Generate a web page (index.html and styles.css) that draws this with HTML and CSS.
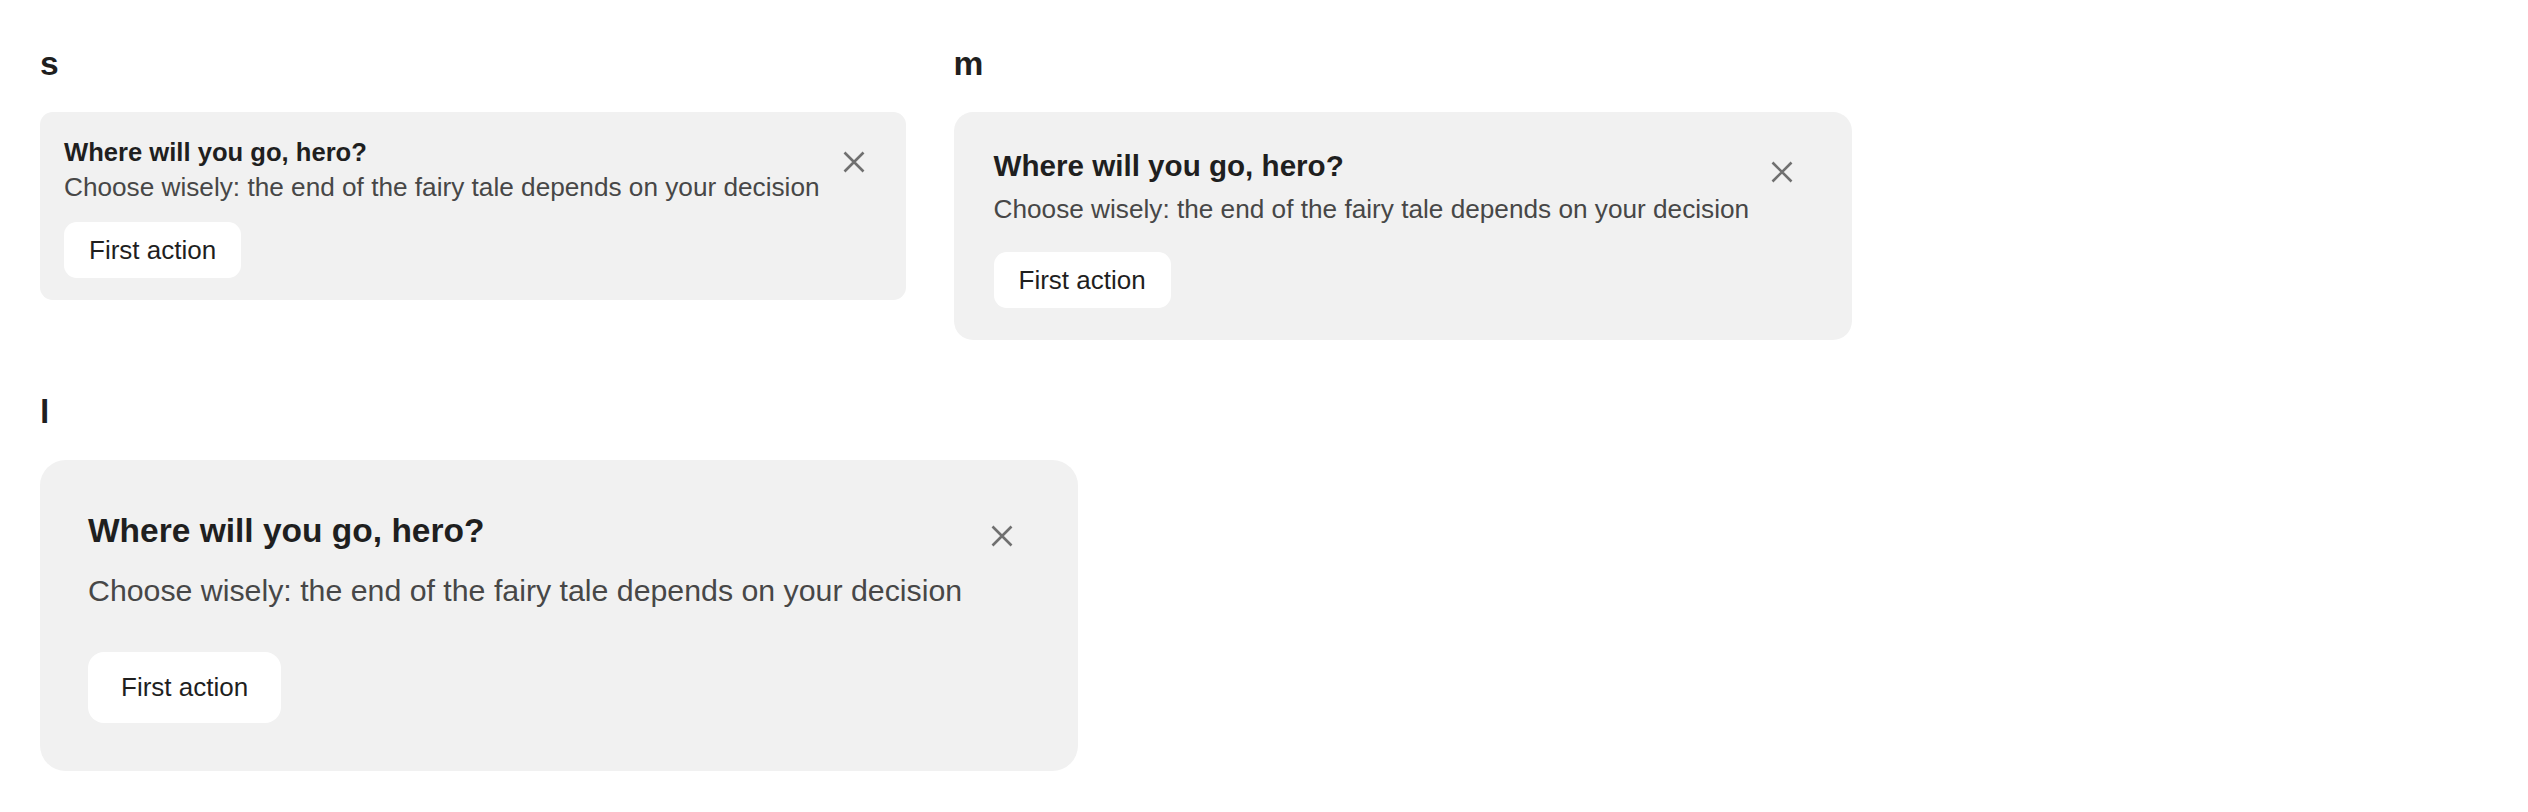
FILE: index.html
```html
<!DOCTYPE html>
<html lang="en">
<head>
<meta charset="utf-8">
<title>Notification sizes</title>
<link rel="stylesheet" href="styles.css">
</head>
<body>
<main class="page">
  <div class="row">
    <section class="variant">
      <div class="label">s</div>
      <div class="card card-s">
        <div class="content">
          <div class="title">Where will you go, hero?</div>
          <div class="desc">Choose wisely: the end of the fairy tale depends on your decision</div>
          <div class="actions"><button class="action" type="button">First action</button></div>
        </div>
        <button class="close" type="button" aria-label="Close">
          <svg viewBox="0 0 22 22" width="22" height="22"><path d="M1.5 1.5 L20.5 20.5 M20.5 1.5 L1.5 20.5" /></svg>
        </button>
      </div>
    </section>
    <section class="variant">
      <div class="label">m</div>
      <div class="card card-m">
        <div class="content">
          <div class="title">Where will you go, hero?</div>
          <div class="desc">Choose wisely: the end of the fairy tale depends on your decision</div>
          <div class="actions"><button class="action" type="button">First action</button></div>
        </div>
        <button class="close" type="button" aria-label="Close">
          <svg viewBox="0 0 22 22" width="22" height="22"><path d="M1.5 1.5 L20.5 20.5 M20.5 1.5 L1.5 20.5" /></svg>
        </button>
      </div>
    </section>
  </div>
  <div class="row row-2">
    <section class="variant">
      <div class="label">l</div>
      <div class="card card-l">
        <div class="content">
          <div class="title">Where will you go, hero?</div>
          <div class="desc">Choose wisely: the end of the fairy tale depends on your decision</div>
          <div class="actions"><button class="action" type="button">First action</button></div>
        </div>
        <button class="close" type="button" aria-label="Close">
          <svg viewBox="0 0 22 22" width="22" height="22"><path d="M1.5 1.5 L20.5 20.5 M20.5 1.5 L1.5 20.5" /></svg>
        </button>
      </div>
    </section>
  </div>
</main>
</body>
</html>
```

FILE: styles.css
```css
html, body {
  margin: 0;
  padding: 0;
  background: #ffffff;
}

body {
  font-family: "Liberation Sans", Arial, Helvetica, sans-serif;
  color: #1f1f1f;
}

.page {
  padding: 44px 40px 0 40px;
  display: flex;
  flex-direction: column;
  align-items: flex-start;
}

.row {
  display: flex;
  align-items: flex-start;
  gap: 48px;
}

.row-2 {
  margin-top: 52px;
}

.variant {
  display: flex;
  flex-direction: column;
  align-items: flex-start;
}

.label {
  font-size: 33.6px;
  line-height: 40px;
  font-weight: 700;
  color: #1f1f1f;
  margin-bottom: 28px;
}

.card {
  display: flex;
  align-items: flex-start;
  background: #f1f1f1;
}

.content {
  display: flex;
  flex-direction: column;
  align-items: flex-start;
}

.title {
  font-weight: 700;
  color: #1f1f1f;
  white-space: nowrap;
}

.desc {
  color: #474747;
  white-space: nowrap;
}

.actions {
  display: flex;
}

.action {
  font-family: "Liberation Sans", Arial, Helvetica, sans-serif;
  font-size: 26px;
  line-height: 30px;
  color: #1f1f1f;
  background: #ffffff;
  border: none;
  margin: 0;
  cursor: pointer;
}

.close {
  display: block;
  width: 22px;
  height: 22px;
  padding: 0;
  margin: 0;
  border: none;
  background: transparent;
  cursor: pointer;
  flex: none;
}

.close svg {
  display: block;
  stroke: #707070;
  stroke-width: 2.6;
  fill: none;
}

/* size s */
.card-s {
  padding: 24px 41px 22px 24px;
  border-radius: 12.8px;
}
.card-s .title {
  font-size: 25.6px;
  line-height: 32px;
}
.card-s .desc {
  font-size: 26.2px;
  line-height: 32px;
  margin-top: 3px;
}
.card-s .actions {
  margin-top: 19px;
}
.card-s .action {
  padding: 13px 25px;
  border-radius: 12.8px;
}
.card-s .close {
  margin-left: 23px;
  margin-top: 15px;
}

/* size m */
.card-m {
  padding: 36px 59px 32px 40px;
  border-radius: 19.2px;
}
.card-m .title {
  font-size: 29.6px;
  line-height: 36px;
}
.card-m .desc {
  font-size: 26.2px;
  line-height: 32px;
  margin-top: 9px;
}
.card-m .actions {
  margin-top: 27px;
}
.card-m .action {
  padding: 13px 25px;
  border-radius: 12.8px;
}
.card-m .close {
  margin-left: 22px;
  margin-top: 13px;
}

/* size l */
.card-l {
  padding: 48px 65px 48px 48px;
  border-radius: 25.6px;
}
.card-l .title {
  font-size: 33.5px;
  line-height: 46px;
}
.card-l .desc {
  font-size: 30.3px;
  line-height: 36px;
  margin-top: 19px;
}
.card-l .actions {
  margin-top: 43px;
}
.card-l .action {
  padding: 20px 33px 21px 33px;
  border-radius: 16px;
}
.card-l .close {
  margin-left: 29px;
  margin-top: 17px;
}
```
